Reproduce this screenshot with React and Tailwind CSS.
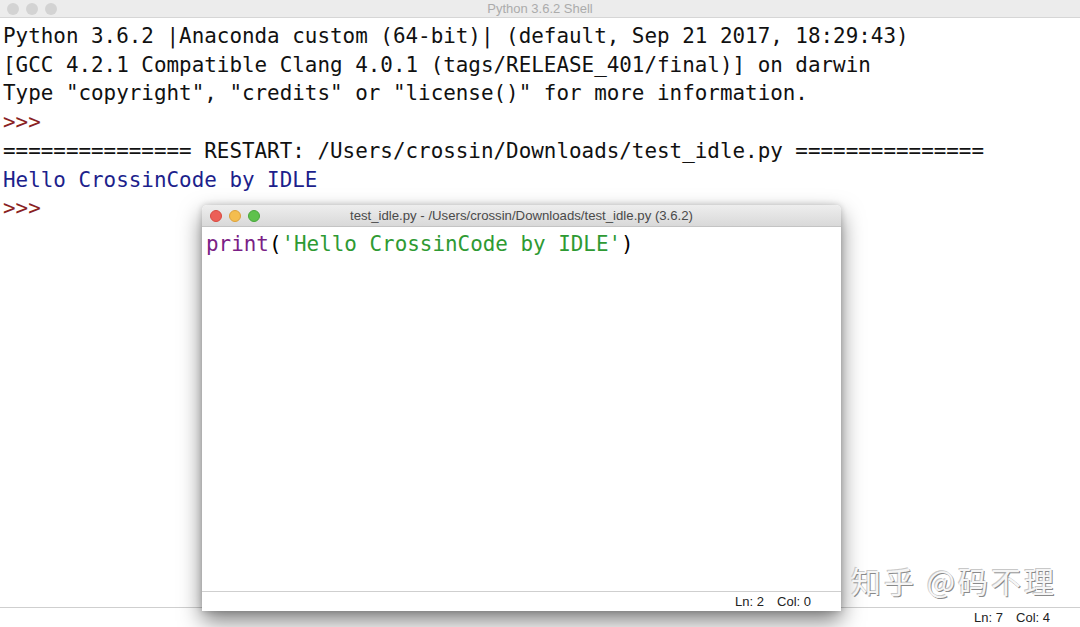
const mono = { fontFamily: '"DejaVu Sans Mono", "Liberation Mono", monospace' };

function Lights({ active }) {
  if (!active) {
    return (
      <div className="flex gap-[7px]">
        <span className="w-[12px] h-[12px] rounded-full bg-[#d3d3d3]" />
        <span className="w-[12px] h-[12px] rounded-full bg-[#d3d3d3]" />
        <span className="w-[12px] h-[12px] rounded-full bg-[#d3d3d3]" />
      </div>
    );
  }
  return (
    <div className="flex gap-[7px]">
      <span className="w-[12px] h-[12px] rounded-full bg-[#ec5f57] border border-[#d9493f]" />
      <span className="w-[12px] h-[12px] rounded-full bg-[#f4bd4f] border border-[#dca13b]" />
      <span className="w-[12px] h-[12px] rounded-full bg-[#5ec14c] border border-[#47a63a]" />
    </div>
  );
}

function EditorWindow() {
  return (
    <div className="absolute left-[202px] top-[187px] w-[639px] h-[406px] flex flex-col bg-white rounded-t-[5px] shadow-[0_10px_22px_rgba(0,0,0,0.5),0_0_6px_rgba(0,0,0,0.2)] font-['Liberation_Sans',sans-serif]">
      <div className="relative h-[22px] flex items-center px-[8px] rounded-t-[5px] bg-gradient-to-b from-[#eeeeee] to-[#d9d9d9] border-b border-[#c4c4c4]">
        <Lights active />
        <div className="absolute inset-0 flex items-center justify-center text-[13.2px] text-[#4a4a4a]">
          test_idle.py - /Users/crossin/Downloads/test_idle.py (3.6.2)
        </div>
      </div>
      <div className="flex-1 pl-[4px] pt-[3px] text-[20.9px] leading-[28.7px]" style={mono}>
        <span className="text-[#7b1f86]">print</span>
        <span className="text-black">(</span>
        <span className="text-[#2e9a33]">'Hello CrossinCode by IDLE'</span>
        <span className="text-black">)</span>
      </div>
      <div className="h-[20px] border-t border-[#cfcfcf] flex items-center justify-end pr-[30px] text-[13px] text-[#222]">
        <span>Ln: 2</span>
        <span className="ml-[13px]">Col: 0</span>
      </div>
    </div>
  );
}

export default function App() {
  const lines = [
    { t: "Python 3.6.2 |Anaconda custom (64-bit)| (default, Sep 21 2017, 18:29:43)", c: "text-[#111]" },
    { t: "[GCC 4.2.1 Compatible Clang 4.0.1 (tags/RELEASE_401/final)] on darwin", c: "text-[#111]" },
    { t: 'Type "copyright", "credits" or "license()" for more information.', c: "text-[#111]" },
    { t: ">>>", c: "text-[#8a1f24]" },
    { t: "=============== RESTART: /Users/crossin/Downloads/test_idle.py ===============", c: "text-[#111]" },
    { t: "Hello CrossinCode by IDLE", c: "text-[#1d1f8c]" },
    { t: ">>>", c: "text-[#8a1f24]" },
  ];

  return (
    <div className="w-[1080px] h-[627px] flex flex-col bg-white overflow-hidden font-['Liberation_Sans',sans-serif]">
      <div className="relative h-[18px] flex items-center px-[7px] bg-[#ececec] border-b border-[#d6d6d6]">
        <Lights />
        <div className="absolute inset-0 flex items-center justify-center text-[13px] text-[#ababab]">
          Python 3.6.2 Shell
        </div>
      </div>

      <div className="relative flex-1">
        <div className="pl-[3px] pt-[4px] text-[20.9px] leading-[28.7px] whitespace-pre" style={mono}>
          {lines.map((l, i) => (
            <div key={i} className={l.c}>{l.t}</div>
          ))}
        </div>

        <EditorWindow />

        <div className="absolute left-[851px] top-[540px] text-[30px] tracking-[3px] text-[#f6f6f6] [text-shadow:1px_1px_0_#8a8a8a,-1px_-1px_0_#c8c8c8] font-['Noto_Sans_CJK_SC',sans-serif]">
          知乎 @码不理
        </div>
      </div>

      <div className="h-[20px] border-t border-[#cfcfcf] flex items-center justify-end pr-[30px] text-[13px] text-[#222]">
        <span>Ln: 7</span>
        <span className="ml-[13px]">Col: 4</span>
      </div>
    </div>
  );
}
